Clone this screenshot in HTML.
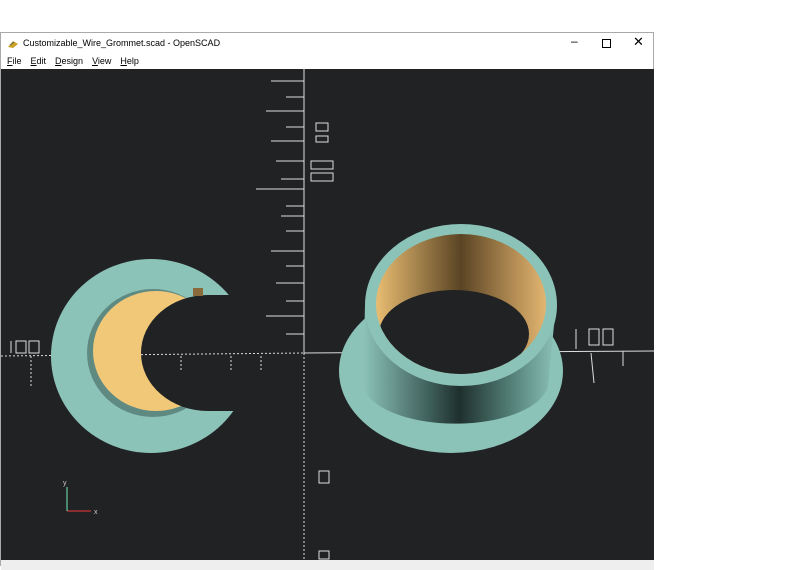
<!DOCTYPE html>
<html><head><style>
body{margin:0;width:800px;height:566px;background:#fff;overflow:hidden;font-family:"Liberation Sans",sans-serif;position:relative}
.win{position:absolute;left:0;top:32px;width:654px;height:534px;border:1px solid #aaa;border-bottom:none;background:#fff;box-sizing:border-box}
.title{position:absolute;left:22px;top:5px;font-size:9px;color:#000}
.menu{position:absolute;left:6px;top:23px;font-size:9px}
.menu span{margin-right:9px}
.vp{position:absolute;left:0;top:36px;width:653px;height:491px;background:#212224}
.tb{position:absolute;left:0;top:527px;width:653px;height:10px;background:#eee}
</style></head><body>
<div class="win">
<svg style="position:absolute;left:6px;top:6px" width="12" height="10"><path d="M1 8 L6 2 L11 5 L6 9Z" fill="#c9a227"/><path d="M3 6 L7 3" stroke="#665" stroke-width="1"/></svg>
<div class="title">Customizable_Wire_Grommet.scad - OpenSCAD</div>
<div style="position:absolute;left:570px;top:1px;font-size:12px">–</div>
<div style="position:absolute;left:601px;top:6px;width:7px;height:7px;border:1px solid #000"></div>
<div style="position:absolute;left:632px;top:1px;font-size:13px">✕</div>
<div class="menu"><span><u>F</u>ile</span><span><u>E</u>dit</span><span><u>D</u>esign</span><span><u>V</u>iew</span><span><u>H</u>elp</span></div>
<div class="vp">
<svg width="653" height="491" viewBox="0 68 653 491">
<defs>
<linearGradient id="cyl" x1="0" x2="1"><stop offset="0" stop-color="#8cc3b8"/><stop offset=".35" stop-color="#3d5d58"/><stop offset=".5" stop-color="#1f302e"/><stop offset=".75" stop-color="#4f7a72"/><stop offset="1" stop-color="#8cc3b8"/></linearGradient>
<linearGradient id="yel" x1="0" x2="1"><stop offset="0" stop-color="#e9bd72"/><stop offset=".5" stop-color="#5a4424"/><stop offset=".8" stop-color="#b08a52"/><stop offset="1" stop-color="#e2b570"/></linearGradient>
<clipPath id="yc"><ellipse cx="460" cy="303" rx="85" ry="70"/></clipPath>
<mask id="cm"><rect x="0" y="68" width="653" height="491" fill="#fff"/><ellipse cx="207" cy="352" rx="67" ry="58" fill="#000"/><rect x="207" y="294" width="60" height="116" fill="#000"/></mask>
</defs>
<g stroke="#ddd" stroke-width="1" fill="none">
<line x1="303" y1="68" x2="303" y2="352"/>
<line x1="303" y1="352" x2="653" y2="350"/>
<line x1="0" y1="355" x2="303" y2="352" stroke-dasharray="2 2"/>
<line x1="303" y1="352" x2="303" y2="559" stroke-dasharray="2 2"/>
<path d="M270 80H303M285 96H303M265 110H303M285 126H303M270 140H303M275 160H303M280 178H303M255 188H303M285 205H303M280 215H303M285 230H303M270 250H303M285 265H303M275 282H303M285 300H303M265 315H303M285 333H303"/>
<path d="M315 122h12v8h-12zM315 135h12v6h-12zM310 160h22v8h-22zM310 172h22v8h-22z"/>
<path d="M395 350v20M430 350v22M465 350v22M500 350v22M575 328v20M588 328h10v16h-10zM602 328h10v16h-10zM590 352l3 30M622 350v15"/>
<path d="M10 340v12M15 340h10v12h-10zM28 340h10v12h-10z"/>
<path d="M30 355v30M60 355v25M120 355v15M180 355v15M230 355v15M260 355v15" stroke-dasharray="2 2"/>
<path d="M318 470h10v12h-10zM318 550h10v8h-10z"/>
</g>
<!-- left crescent -->
<g mask="url(#cm)">
<ellipse cx="150" cy="355" rx="100" ry="97" fill="#8cc3b8"/>
<ellipse cx="152" cy="352" rx="66" ry="64" fill="#5f8a82"/>
<ellipse cx="155" cy="350" rx="63" ry="60" fill="#f0c878"/>
</g>
<rect x="192" y="287" width="10" height="8" fill="#8a6a3a"/>
<!-- right object -->
<ellipse cx="450" cy="370" rx="112" ry="82" fill="#8cc3b8"/>
<path d="M364 304 L362 385 A93 42 0 0 0 547 385 L555 304Z" fill="url(#cyl)"/>
<ellipse cx="460" cy="304" rx="96" ry="81" fill="#8cc3b8"/>
<ellipse cx="460" cy="303" rx="85" ry="70" fill="url(#yel)"/>
<ellipse cx="453" cy="333" rx="75" ry="44" fill="#212224" clip-path="url(#yc)"/>
<!-- axes gizmo -->
<line x1="66" y1="510" x2="90" y2="510" stroke="#a33" stroke-width="1.5"/>
<line x1="66" y1="510" x2="66" y2="486" stroke="#5a8" stroke-width="1.5"/>
<text x="93" y="513" fill="#ccc" font-size="7">x</text>
<text x="62" y="484" fill="#ccc" font-size="7">y</text>
</svg>
</div>
<div class="tb"></div>
</div>
</body></html>
